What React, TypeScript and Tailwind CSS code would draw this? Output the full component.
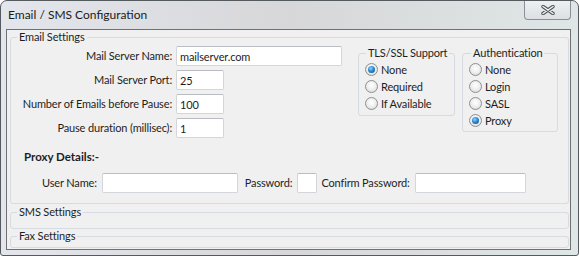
import React from 'react'

const Radio: React.FC<{ label: string; checked?: boolean }> = ({ label, checked }) => (
  <div className="flex h-[17px] items-center gap-[3px] whitespace-nowrap">
    <span className="flex h-[13px] w-[13px] shrink-0 items-center justify-center rounded-full border border-[#8e8f8f] bg-[radial-gradient(circle_at_50%_40%,#ffffff_0%,#f0f0f0_45%,#d4d4d4_100%)]">
      {checked && (
        <span className="h-[7px] w-[7px] rounded-full bg-[radial-gradient(circle_at_40%_35%,#8fd3ff_0%,#2b8ad2_45%,#0d3f78_100%)]" />
      )}
    </span>
    <span>{label}</span>
  </div>
)

const Field: React.FC<{ value?: string; className?: string }> = ({ value = '', className = '' }) => (
  <input
    readOnly
    defaultValue={value}
    className={`h-[20px] rounded-[2px] border border-[#d3d6da] border-t-[#b9bcc1] bg-white px-[3px] text-[11px] text-[#1e1e1e] outline-none ${className}`}
  />
)

const App: React.FC = () => {
  return (
    <div className="h-[256px] w-[579px] bg-white font-['Lato','Noto_Sans',sans-serif] text-[11px] leading-[14px] tracking-[-0.15px] text-[#1e1e1e]">
      <div className="flex h-full flex-col rounded-t-[7px] rounded-b-[3px] border border-[#555a5f] bg-linear-to-r from-[#e3e6ec] via-[#d7d7d9] to-[#dfe6e6]">
        {/* title bar */}
        <div className="flex h-[28px] shrink-0 items-start justify-between">
          <span className="ml-[7px] mt-[6px] text-[12px] leading-[16px] tracking-normal text-[#1a1a1a]">Email / SMS Configuration</span>
          <div className="mr-[7px] flex h-[19px] w-[47px] items-center justify-center rounded-b-[4px] border border-t-0 border-[#8c8f93] bg-linear-to-b from-[#eef0f2] to-[#dcdfe3]">
            <svg width="14" height="10" viewBox="0 0 14 10">
              <path d="M2 1.5 L12 8.5 M12 1.5 L2 8.5" stroke="#4f5357" strokeWidth="3.4" strokeLinecap="round" />
              <path d="M2 1.5 L12 8.5 M12 1.5 L2 8.5" stroke="#f3f4f5" strokeWidth="1.5" strokeLinecap="round" />
            </svg>
          </div>
        </div>

        {/* client area */}
        <div className="mb-[5px] ml-[5px] mr-[7px] flex flex-1 flex-col border border-[#707070] bg-[#f0f0f0] pl-[3px] pr-[1px]">
          <fieldset className="rounded-[3px] border border-[#d5dbe0] pb-[10px]">
            <legend className="ml-[6px] px-[2px] leading-[14px]">Email Settings</legend>
            <div className="flex items-start pt-[2px]">
              <div className="grid w-[331px] grid-cols-[161px_166px] items-center gap-x-[4px] gap-y-[4px] whitespace-nowrap">
                <span className="text-right">Mail Server Name:</span>
                <Field value="mailserver.com" className="w-[166px]" />
                <span className="text-right">Mail Server Port:</span>
                <Field value="25" className="w-[48px]" />
                <span className="text-right">Number of Emails before Pause:</span>
                <Field value="100" className="w-[48px]" />
                <span className="text-right">Pause duration (millisec):</span>
                <Field value="1" className="w-[48px]" />
              </div>

              <fieldset className="ml-[16px] w-[97px] rounded-[3px] border border-[#d5dbe0] pb-[3px] pl-[6px]">
                <legend className="ml-[1px] whitespace-nowrap px-[2px] leading-[14px]">TLS/SSL Support</legend>
                <div className="pt-[1px]">
                  <Radio label="None" checked />
                  <Radio label="Required" />
                  <Radio label="If Available" />
                </div>
              </fieldset>

              <fieldset className="ml-[7px] w-[96px] rounded-[3px] border border-[#d5dbe0] pb-[2px] pl-[6px]">
                <legend className="ml-[2px] whitespace-nowrap px-[2px] leading-[14px]">Authentication</legend>
                <div className="pt-[1px]">
                  <Radio label="None" />
                  <Radio label="Login" />
                  <Radio label="SASL" />
                  <Radio label="Proxy" checked />
                </div>
              </fieldset>
            </div>

            <div className="mt-[12px] pl-[13px] text-[11.5px] font-bold tracking-normal">Proxy Details:-</div>

            <div className="mt-[9px] flex items-center whitespace-nowrap pl-[31px]">
              <span>User Name:</span>
              <Field className="ml-[5px] w-[136px]" />
              <span className="ml-[7px]">Password:</span>
              <Field className="ml-[5px] w-[20px]" />
              <span className="ml-[4px]">Confirm Password:</span>
              <Field className="ml-[5px] w-[111px]" />
            </div>
          </fieldset>

          <fieldset className="mt-[1px] rounded-[3px] border border-[#d5dbe0] pb-[9px]">
            <legend className="ml-[6px] px-[2px] leading-[14px]">SMS Settings</legend>
          </fieldset>

          <fieldset className="rounded-[3px] border border-[#d5dbe0] pb-[4px]">
            <legend className="ml-[6px] px-[2px] leading-[14px]">Fax Settings</legend>
          </fieldset>
        </div>
      </div>
    </div>
  )
}

export default App
